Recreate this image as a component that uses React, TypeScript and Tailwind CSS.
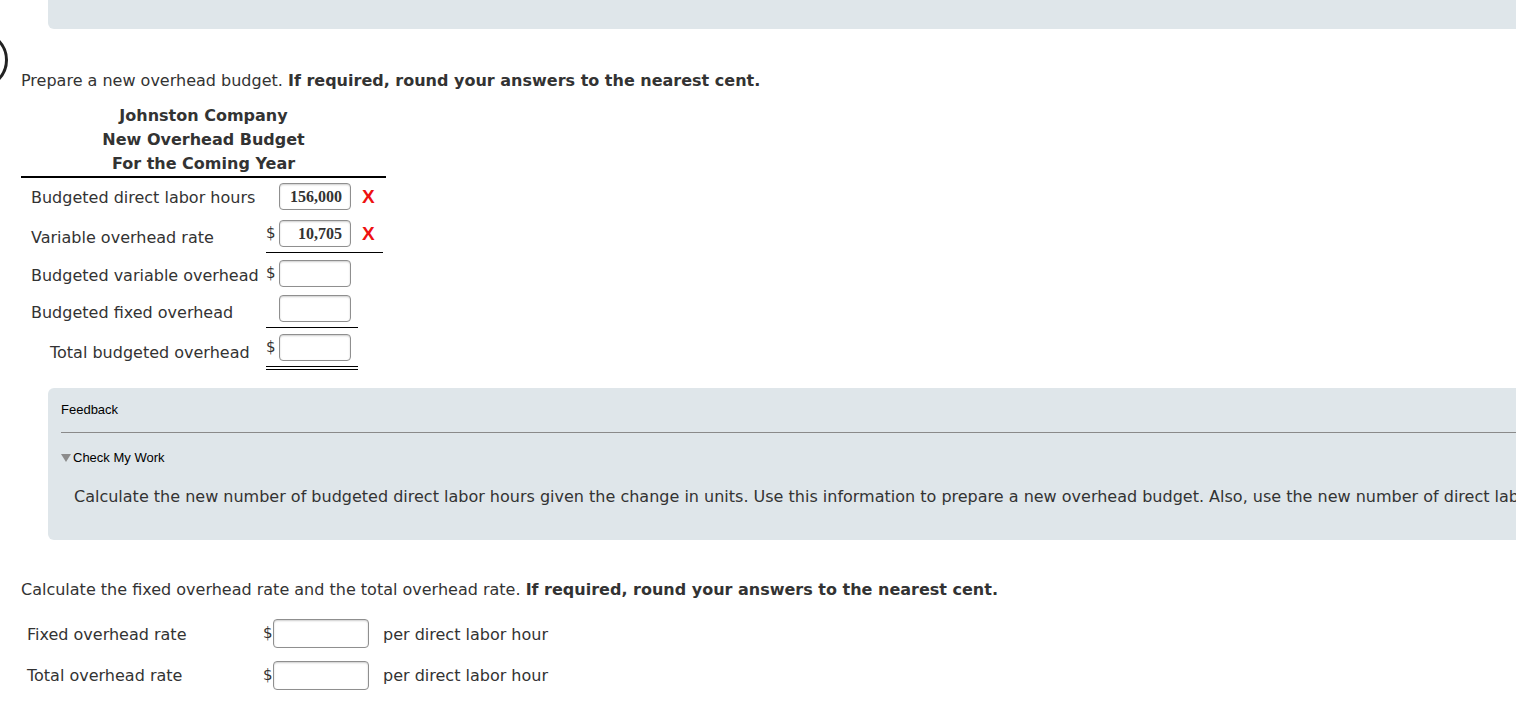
import React from 'react'

const VERDANA = "font-['DejaVu_Sans',Verdana,sans-serif]"
const ARIAL = "font-['Liberation_Sans',Arial,sans-serif]"

function AnswerBox({ value, tall }: { value?: string; tall?: boolean }) {
  return (
    <div
      className={`${tall ? 'h-[29px] w-[96px]' : 'h-[27px] w-[72px]'} rounded-[4px] border border-[#8f8f8f] bg-white shadow-[inset_0_1px_2px_rgba(0,0,0,0.2)] flex items-center justify-end pr-[8px] font-['Liberation_Serif','Times_New_Roman',serif] font-bold text-[16px] text-[#333]`}
    >
      {value}
    </div>
  )
}

function Wrong() {
  return (
    <span className={`${ARIAL} font-bold text-[19px] text-[#ee1111] leading-none`}>X</span>
  )
}

function BudgetRow({
  label,
  value,
  dollar,
  wrong,
  indent,
  height,
  drop = '',
}: {
  label: string
  value?: string
  dollar?: boolean
  wrong?: boolean
  indent?: boolean
  height: string
  drop?: string
}) {
  return (
    <div className={`flex items-center ${height}`}>
      <div className={`${indent ? 'pl-[29px]' : 'pl-[10px]'} w-[245px] whitespace-nowrap ${drop}`}>{label}</div>
      <div className="w-[13px] text-[15px]">{dollar ? '$' : ''}</div>
      <AnswerBox value={value} />
      <div className="w-[11px]" />
      {wrong && <Wrong />}
    </div>
  )
}

export default function App() {
  return (
    <div className={`relative w-[1516px] h-[710px] overflow-hidden bg-white text-[#333] text-[16px] ${VERDANA}`}>
      {/* question number bubble, mostly off screen */}
      <div className="absolute left-[-50px] top-[31px] w-[58px] h-[58px] rounded-full border-[3px] border-[#222]" />

      {/* previous part */}
      <div className="ml-[48px] w-[1560px] h-[29px] bg-[#dfe6ea] rounded-bl-[6px]" />

      <div className="pl-[21px]">
        <p className="mt-[41px] leading-[20px] pt-[1px]">
          Prepare a new overhead budget. <b>If required, round your answers to the nearest cent.</b>
        </p>

        <div className="mt-[13px] w-[365px]">
          <div className="text-center font-bold leading-[24px] border-b-2 border-black">
            <div>Johnston Company</div>
            <div>New Overhead Budget</div>
            <div>For the Coming Year</div>
          </div>
          <BudgetRow label="Budgeted direct labor hours" value="156,000" wrong height="h-[37px]" drop="pt-[2px]" />
          <BudgetRow label="Variable overhead rate" value="10,705" dollar wrong height="h-[37px]" drop="pt-[8px]" />
          <div className="mb-[2px] ml-[245px] w-[117px] border-t border-black" />
          <BudgetRow label="Budgeted variable overhead" dollar height="h-[37px]" drop="pt-[4px]" />
          <BudgetRow label="Budgeted fixed overhead" height="h-[33px]" drop="pt-[8px]" />
          <div className="mt-[2px] ml-[245px] w-[92px] border-t border-black" />
          <BudgetRow label="Total budgeted overhead" dollar indent height="h-[38px]" drop="pt-[12px]" />
          <div className="ml-[245px] w-[92px] h-[4px] border-y border-black" />
        </div>
      </div>

      {/* feedback */}
      <div className="mt-[18px] ml-[48px] w-[1560px] bg-[#dfe6ea] rounded-[6px] pl-[13px] pt-[14px] pb-[33px]">
        <div className={`${ARIAL} text-[13px] leading-[16px] text-black`}>Feedback</div>
        <div className="mt-[14px] border-t border-[#8a8a8a]" />
        <div className={`mt-[17px] flex items-center ${ARIAL} text-[13px] leading-[16px] text-black`}>
          <svg width="12" height="10" viewBox="0 0 12 10" className="ml-[-1px] mr-[1px]">
            <path d="M1 1 L11 1 L6 9 Z" fill="#8c8c8c" />
          </svg>
          Check My Work
        </div>
        <p className="mt-[21px] ml-[13px] leading-[20px] whitespace-nowrap">
          Calculate the new number of budgeted direct labor hours given the change in units. Use this information to prepare a new overhead budget. Also, use the new number of direct labor hours to calculate the new fixed overhead rate.
        </p>
      </div>

      {/* next part */}
      <div className="pl-[21px]">
        <p className="mt-[40px] leading-[20px]">
          Calculate the fixed overhead rate and the total overhead rate. <b>If required, round your answers to the nearest cent.</b>
        </p>
        <div className="mt-[14px]">
          <div className="flex items-center h-[39px]">
            <div className="pl-[6px] w-[242px] pt-[2px]">Fixed overhead rate</div>
            <div className="w-[10px] text-[15px]">$</div>
            <AnswerBox tall />
            <div className="pl-[14px] pt-[2px]">per direct labor hour</div>
          </div>
          <div className="flex items-center h-[44px]">
            <div className="pl-[6px] w-[242px] pt-[2px]">Total overhead rate</div>
            <div className="w-[10px] text-[15px]">$</div>
            <AnswerBox tall />
            <div className="pl-[14px] pt-[2px]">per direct labor hour</div>
          </div>
        </div>
      </div>
    </div>
  )
}
